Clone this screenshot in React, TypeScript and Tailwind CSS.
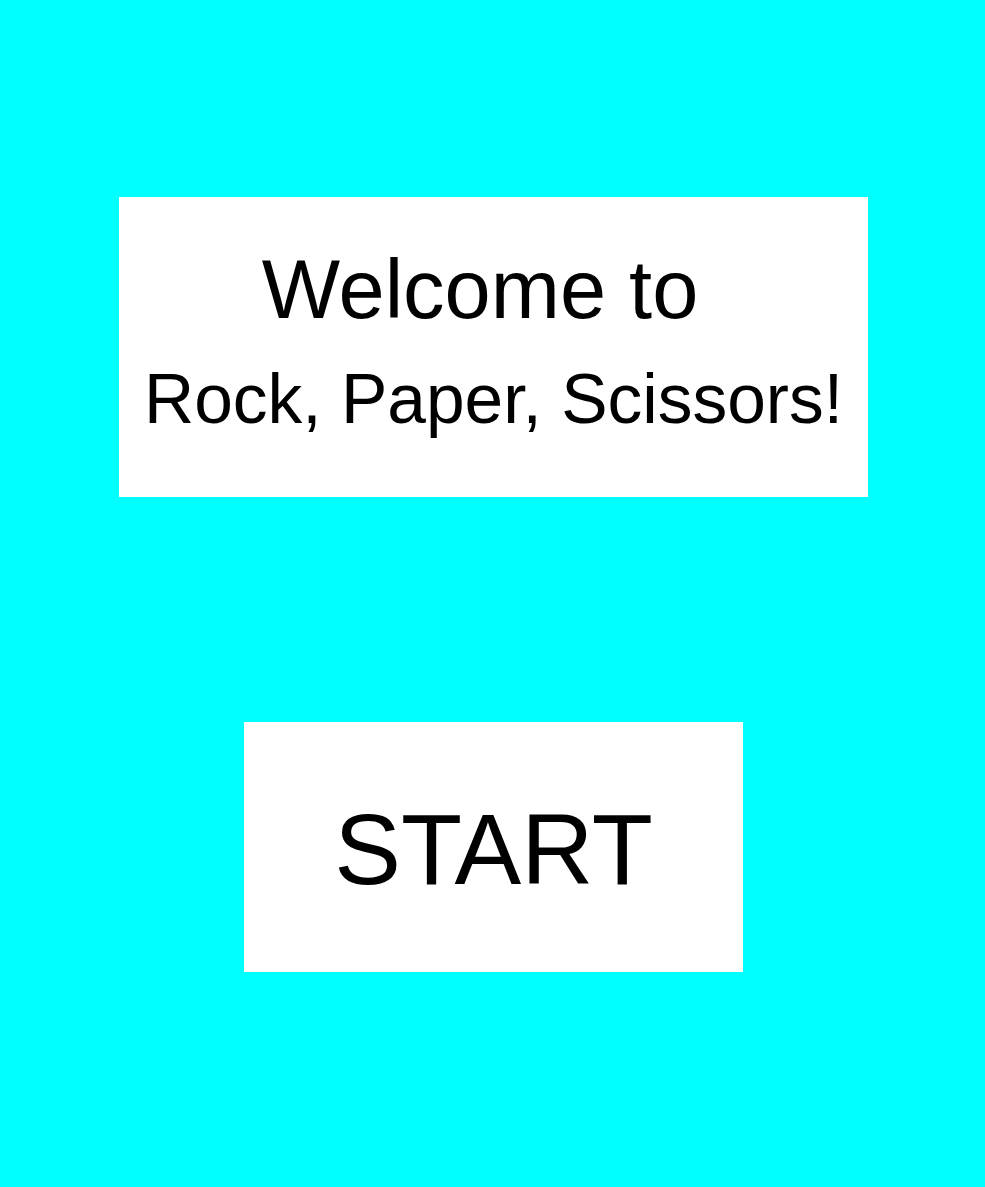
export default function App() {
  return (
    <div
      className="min-h-[1187px] w-full bg-[#00ffff] flex flex-col items-center pt-[197px] pl-[2px] text-black"
      style={{ fontFamily: '"Liberation Sans", Arial, sans-serif' }}
    >
      <div className="w-[749px] h-[300px] bg-white flex flex-col items-center pt-[45px]">
        <h1 className="text-[83px] leading-[95px] font-normal pr-[27px]">Welcome to</h1>
        <h2 className="mt-[22px] text-[69.5px] leading-[80px] font-normal">Rock, Paper, Scissors!</h2>
      </div>

      <button className="mt-[225px] w-[499px] h-[250px] bg-white flex items-center justify-center pt-[4px] cursor-pointer">
        <span className="text-[100px] leading-[115px]">START</span>
      </button>
    </div>
  );
}
